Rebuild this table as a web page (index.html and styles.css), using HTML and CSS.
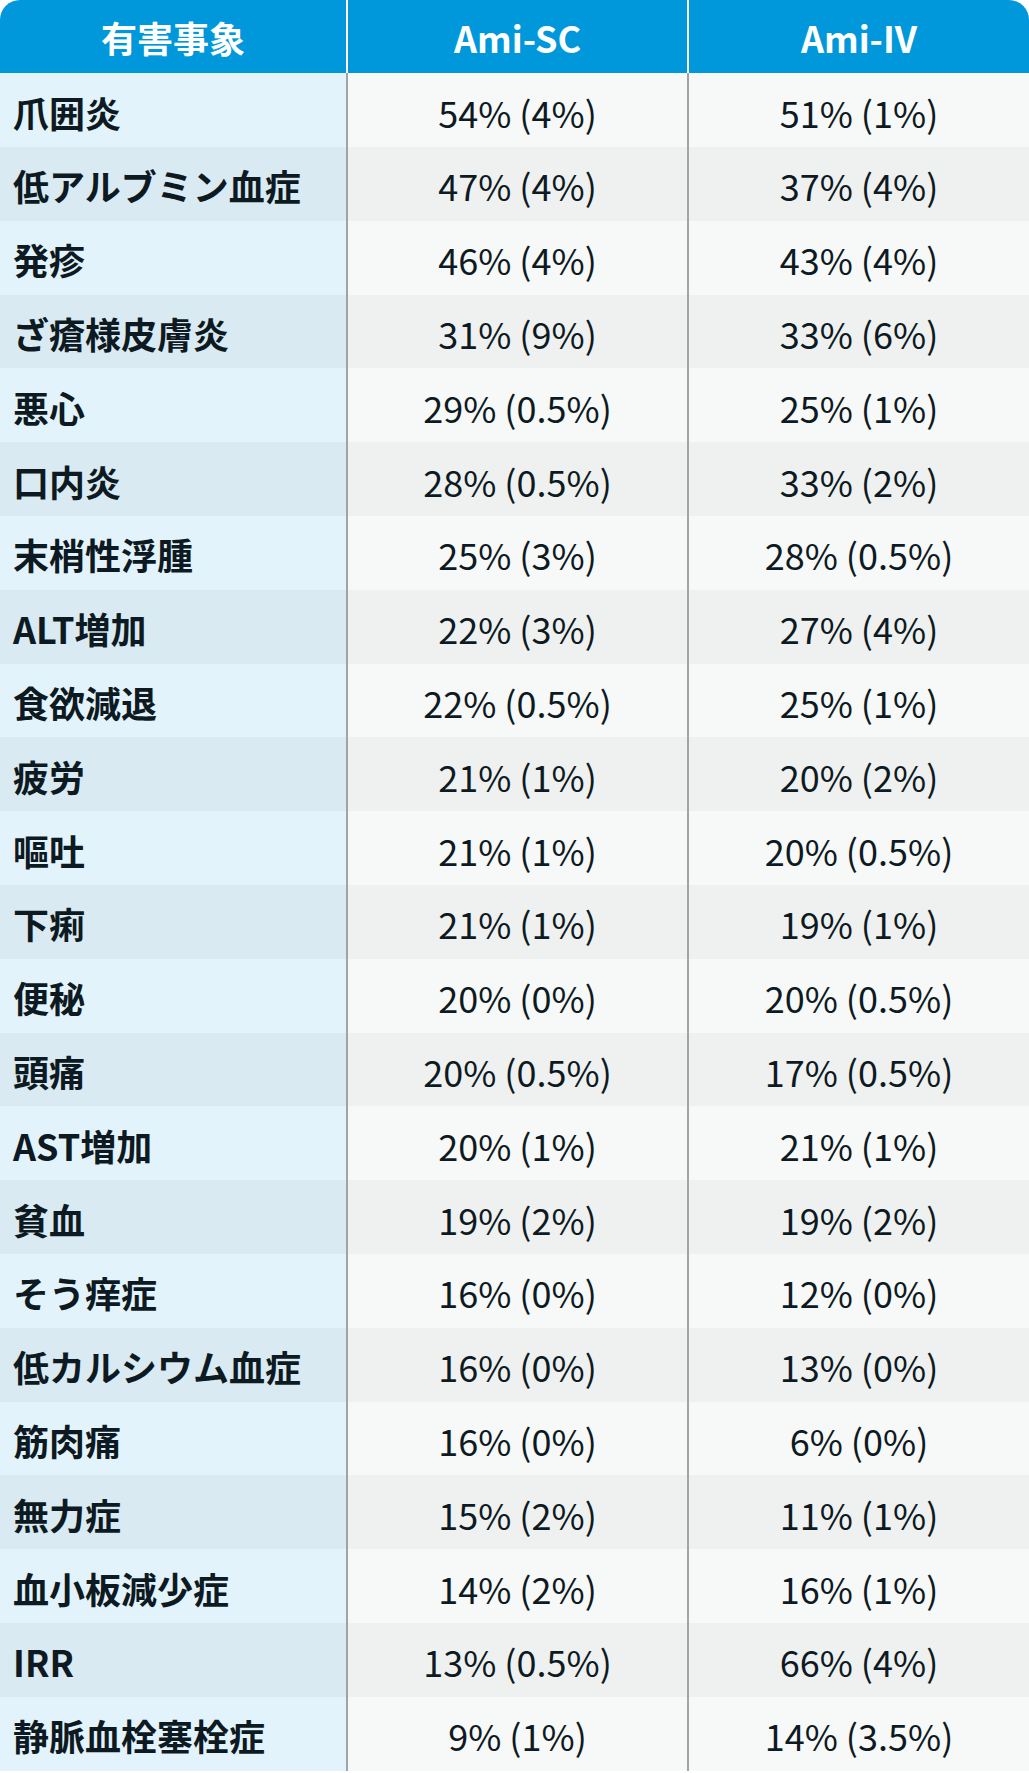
FILE: index.html
```html
<!DOCTYPE html>
<html lang="ja">
<head>
<meta charset="utf-8">
<title>有害事象</title>
<link rel="stylesheet" href="styles.css">
</head>
<body>
<div class="table">
  <div class="head">
    <div class="hcell">有害事象</div>
    <div class="hcell sep">Ami-SC</div>
    <div class="hcell sep">Ami-IV</div>
  </div>
  <div class="body">
    <div class="row"><div class="cell name">爪囲炎</div><div class="cell val">54% (4%)</div><div class="cell val">51% (1%)</div></div>
    <div class="row"><div class="cell name">低アルブミン血症</div><div class="cell val">47% (4%)</div><div class="cell val">37% (4%)</div></div>
    <div class="row"><div class="cell name">発疹</div><div class="cell val">46% (4%)</div><div class="cell val">43% (4%)</div></div>
    <div class="row"><div class="cell name">ざ瘡様皮膚炎</div><div class="cell val">31% (9%)</div><div class="cell val">33% (6%)</div></div>
    <div class="row"><div class="cell name">悪心</div><div class="cell val">29% (0.5%)</div><div class="cell val">25% (1%)</div></div>
    <div class="row"><div class="cell name">口内炎</div><div class="cell val">28% (0.5%)</div><div class="cell val">33% (2%)</div></div>
    <div class="row"><div class="cell name">末梢性浮腫</div><div class="cell val">25% (3%)</div><div class="cell val">28% (0.5%)</div></div>
    <div class="row"><div class="cell name">ALT増加</div><div class="cell val">22% (3%)</div><div class="cell val">27% (4%)</div></div>
    <div class="row"><div class="cell name">食欲減退</div><div class="cell val">22% (0.5%)</div><div class="cell val">25% (1%)</div></div>
    <div class="row"><div class="cell name">疲労</div><div class="cell val">21% (1%)</div><div class="cell val">20% (2%)</div></div>
    <div class="row"><div class="cell name">嘔吐</div><div class="cell val">21% (1%)</div><div class="cell val">20% (0.5%)</div></div>
    <div class="row"><div class="cell name">下痢</div><div class="cell val">21% (1%)</div><div class="cell val">19% (1%)</div></div>
    <div class="row"><div class="cell name">便秘</div><div class="cell val">20% (0%)</div><div class="cell val">20% (0.5%)</div></div>
    <div class="row"><div class="cell name">頭痛</div><div class="cell val">20% (0.5%)</div><div class="cell val">17% (0.5%)</div></div>
    <div class="row"><div class="cell name">AST増加</div><div class="cell val">20% (1%)</div><div class="cell val">21% (1%)</div></div>
    <div class="row"><div class="cell name">貧血</div><div class="cell val">19% (2%)</div><div class="cell val">19% (2%)</div></div>
    <div class="row"><div class="cell name">そう痒症</div><div class="cell val">16% (0%)</div><div class="cell val">12% (0%)</div></div>
    <div class="row"><div class="cell name">低カルシウム血症</div><div class="cell val">16% (0%)</div><div class="cell val">13% (0%)</div></div>
    <div class="row"><div class="cell name">筋肉痛</div><div class="cell val">16% (0%)</div><div class="cell val">6% (0%)</div></div>
    <div class="row"><div class="cell name">無力症</div><div class="cell val">15% (2%)</div><div class="cell val">11% (1%)</div></div>
    <div class="row"><div class="cell name">血小板減少症</div><div class="cell val">14% (2%)</div><div class="cell val">16% (1%)</div></div>
    <div class="row"><div class="cell name">IRR</div><div class="cell val">13% (0.5%)</div><div class="cell val">66% (4%)</div></div>
    <div class="row"><div class="cell name">静脈血栓塞栓症</div><div class="cell val">9% (1%)</div><div class="cell val">14% (3.5%)</div></div>
  </div>
</div>
</body>
</html>
```

FILE: styles.css
```css
html, body {
  margin: 0;
  padding: 0;
  background: #ffffff;
}

body {
  font-family: "Noto Sans CJK JP", "Noto Sans", sans-serif;
  color: #0e1a22;
}

.table {
  width: 1029px;
  display: flex;
  flex-direction: column;
}

.head {
  display: grid;
  grid-template-columns: 346px 341px 342px;
  height: 73.3px;
  background: #0098da;
  border-radius: 20px 20px 0 0;
}

.hcell {
  display: flex;
  align-items: center;
  justify-content: center;
  color: #ffffff;
  font-size: 36px;
  font-weight: 700;
  line-height: 1;
  padding-top: 1px;
}

.hcell.sep {
  border-left: 2px solid #ffffff;
}

.body {
  display: flex;
  flex-direction: column;
}

.row {
  display: grid;
  grid-template-columns: 346px 341px 342px;
  height: 73.8px;
}

.cell {
  display: flex;
  align-items: center;
  font-size: 36px;
  line-height: 1;
  padding-top: 3px;
}

.cell.name {
  padding-left: 13px;
  font-weight: 700;
  background: #e3f3fb;
}

.cell.val {
  justify-content: center;
  font-weight: 400;
  background: #f7f8f8;
  border-left: 2px solid #9fa4a7;
}

.row:nth-child(even) .cell.name {
  background: #d9eaf2;
}

.row:nth-child(even) .cell.val {
  background: #eff1f1;
}
```
